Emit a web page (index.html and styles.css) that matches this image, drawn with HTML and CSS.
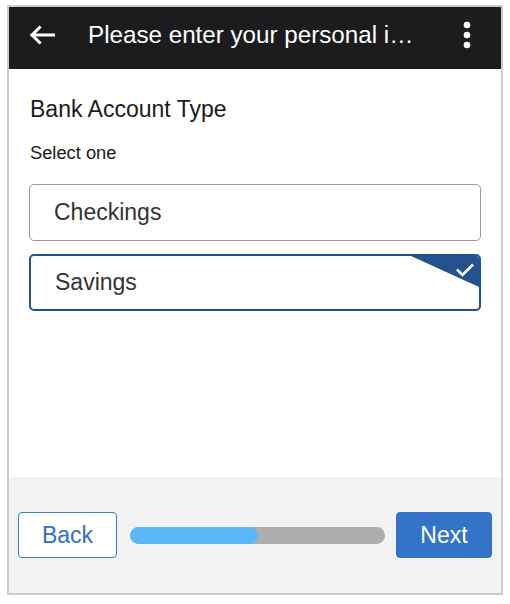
FILE: index.html
```html
<!DOCTYPE html>
<html lang="en">
<head>
<meta charset="utf-8">
<title>Bank Account Type</title>
<link rel="stylesheet" href="styles.css">
</head>
<body>
<div class="frame">
  <header class="topbar">
    <svg class="back-icon" width="26" height="20" viewBox="0 0 26 20" aria-hidden="true">
      <path d="M25 10 H3 M10.5 2.5 L3 10 L10.5 17.5" fill="none" stroke="#fff" stroke-width="3" stroke-linecap="square" stroke-linejoin="miter"/>
    </svg>
    <div class="title">Please enter your personal i…</div>
    <svg class="more-icon" width="8" height="28" viewBox="0 0 8 28" aria-hidden="true">
      <circle cx="4" cy="4" r="3.3" fill="#fff"/>
      <circle cx="4" cy="14" r="3.3" fill="#fff"/>
      <circle cx="4" cy="24" r="3.3" fill="#fff"/>
    </svg>
  </header>
  <main class="content">
    <h1 class="heading">Bank Account Type</h1>
    <p class="hint">Select one</p>
    <div class="options">
      <div class="option">Checkings</div>
      <div class="option selected">Savings
        <span class="corner">
          <svg width="68" height="31" viewBox="0 0 68 31" aria-hidden="true">
            <polygon points="0,0 68,0 68,31" fill="#24528f"/>
            <path d="M46 13.5 L51.5 19 L62 8.5" fill="none" stroke="#fff" stroke-width="2.5"/>
          </svg>
        </span>
      </div>
    </div>
  </main>
  <footer class="footer">
    <button class="btn btn-back">Back</button>
    <div class="progress"><div class="progress-fill" style="width:50%"></div></div>
    <button class="btn btn-next">Next</button>
  </footer>
</div>
</body>
</html>
```

FILE: styles.css
```css
* { box-sizing: border-box; }
html, body {
  margin: 0;
  padding: 0;
  background: #ffffff;
  font-family: "Liberation Sans", Arial, sans-serif;
}
.frame {
  margin: 5px 0 0 7px;
  width: 496px;
  height: 590px;
  border: 2px solid #cdcdcd;
  display: flex;
  flex-direction: column;
  background: #fff;
}
.topbar {
  height: 62px;
  flex: none;
  background: #1c1c1f;
  display: flex;
  align-items: center;
  padding: 0 30px 7px 20px;
}
.back-icon { flex: none; }
.title {
  flex: 1;
  margin-left: 33px;
  color: #ffffff;
  font-size: 24.2px;
  line-height: 28px;
  white-space: nowrap;
}
.more-icon { flex: none; }
.content {
  flex: 1;
  padding: 27px 20px 0 20px;
}
.heading {
  margin: 0 0 0 1px;
  font-size: 23px;
  line-height: 27px;
  font-weight: normal;
  color: #1a1a1a;
}
.hint {
  margin: 19px 0 0 1px;
  font-size: 18.3px;
  line-height: 22px;
  color: #1a1a1a;
}
.options {
  margin-top: 20px;
  display: flex;
  flex-direction: column;
  gap: 13px;
}
.option {
  position: relative;
  height: 57px;
  border: 1px solid #9a9a9a;
  border-radius: 5px;
  display: flex;
  align-items: center;
  padding: 0 0 1px 24px;
  font-size: 23px;
  color: #333333;
  overflow: hidden;
}
.option.selected {
  border: 2px solid #24528f;
  padding-left: 24px;
}
.corner {
  position: absolute;
  top: 0;
  right: 0;
  width: 68px;
  height: 31px;
  display: block;
}
.corner svg { display: block; }
.footer {
  height: 116px;
  flex: none;
  background: #f2f2f2;
  display: flex;
  align-items: center;
  padding: 0 9px;
}
.btn {
  height: 46px;
  border-radius: 4px;
  font-family: "Liberation Sans", Arial, sans-serif;
  font-size: 23px;
  padding: 0;
  cursor: pointer;
}
.btn-back {
  width: 99px;
  background: #ffffff;
  border: 1px solid #3a78d0;
  color: #2f6fca;
}
.btn-next {
  width: 96px;
  background: #3374c9;
  border: 1px solid #3374c9;
  color: #ffffff;
}
.progress {
  flex: 1;
  margin: 0 11px 0 13px;
  height: 17px;
  border-radius: 9px;
  background: #adadad;
  overflow: hidden;
}
.progress-fill {
  height: 100%;
  border-radius: 9px;
  background: #5ab7f8;
}
```
